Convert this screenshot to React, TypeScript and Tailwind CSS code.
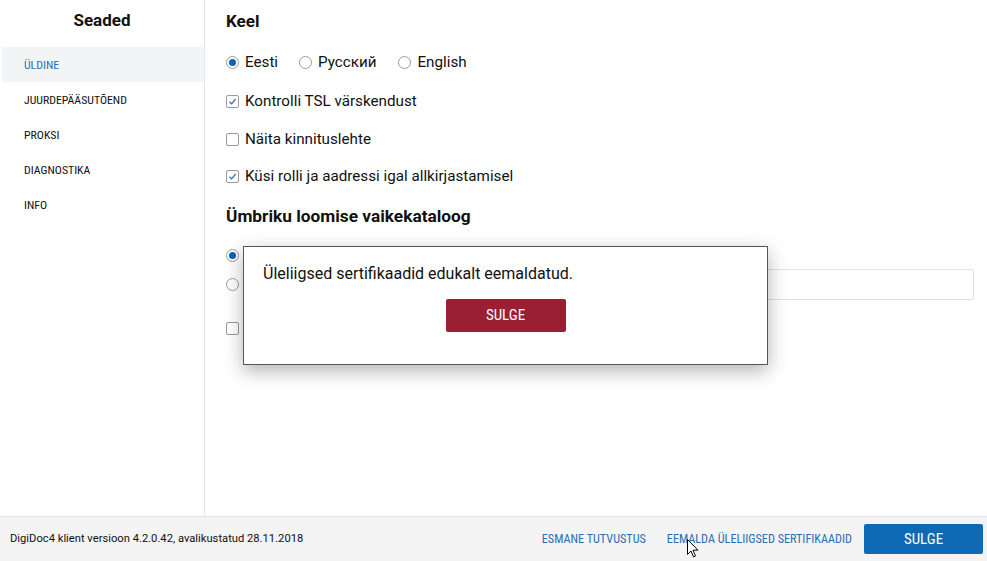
import React from "react";

const cond = "font-['Roboto_Condensed','Liberation_Sans_Narrow','DejaVu_Sans_Condensed',sans-serif]";

const Radio = ({checked}: {checked?: boolean}) => (
  <span className="inline-flex items-center justify-center w-[13px] h-[13px] rounded-full border border-[#9a9a9a] bg-white shrink-0">
    {checked && <span className="w-[7px] h-[7px] rounded-full bg-[#0f64b0]" />}
  </span>
);

const Check = ({checked}: {checked?: boolean}) => (
  <span className="inline-flex items-center justify-center w-[13px] h-[13px] rounded-[2px] border border-[#9a9a9a] bg-white shrink-0">
    {checked && (
      <svg width="9" height="9" viewBox="0 0 9 9" fill="none">
        <path d="M1.5 4.8 L3.6 6.8 L7.6 2" stroke="#2a6fb5" strokeWidth="1.2" />
      </svg>
    )}
  </span>
);

const navItems = ["ÜLDINE", "JUURDEPÄÄSUTÕEND", "PROKSI", "DIAGNOSTIKA", "INFO"];

export default function App() {
  return (
    <div className="w-[987px] h-[561px] flex flex-col bg-white font-['Roboto',sans-serif] text-[#111] overflow-hidden relative">
      <div className="flex flex-1 min-h-0">
        {/* sidebar */}
        <div className="w-[205px] border-r border-[#e2e5ea] flex flex-col pt-[9px]">
          <div className="text-center font-bold text-[17px] leading-[22px]">Seaded</div>
          <div className="mt-[16px] ml-[2px] flex flex-col">
            {navItems.map((n, i) => (
              <div
                key={n}
                className={`h-[35px] flex items-center pl-[22px] pt-[2px] text-[11.8px] ${cond} ${
                  i === 0 ? "bg-[#f3f4f6] text-[#2a6fb5]" : "text-[#111]"
                }`}>
                {n}
              </div>
            ))}
          </div>
        </div>

        {/* main */}
        <div className="flex-1 pl-[21px] pr-[13px] pt-[10px] flex flex-col">
          <div className="font-bold text-[17px] leading-[22px]">Keel</div>
          <div className="flex items-center mt-[19px] h-[22px] text-[15.2px]">
            <Radio checked />
            <span className="ml-[6px] mr-[21px]">Eesti</span>
            <Radio />
            <span className="ml-[6px] mr-[22px]">Русский</span>
            <Radio />
            <span className="ml-[6px]">English</span>
          </div>
          <div className="flex items-center mt-[17px] h-[22px] text-[15.2px]">
            <Check checked />
            <span className="ml-[6px]">Kontrolli TSL värskendust</span>
          </div>
          <div className="flex items-center mt-[16px] h-[22px] text-[15.2px]">
            <Check />
            <span className="ml-[6px]">Näita kinnituslehte</span>
          </div>
          <div className="flex items-center mt-[15px] h-[22px] text-[15.2px]">
            <Check checked />
            <span className="ml-[6px]">Küsi rolli ja aadressi igal allkirjastamisel</span>
          </div>
          <div className="font-bold text-[17.3px] leading-[22px] mt-[18px]">Ümbriku loomise vaikekataloog</div>
          <div className="flex items-center mt-[21px] h-[14px]">
            <Radio checked />
          </div>
          <div className="flex items-center mt-[7px] h-[31px]">
            <Radio />
            <div className="flex-1 ml-[520px] h-[31px] border border-[#dde2ea] rounded-[2px]" />
          </div>
          <div className="flex items-center mt-[22px] h-[13px]">
            <Check />
          </div>
        </div>
      </div>

      {/* footer */}
      <div className="h-[45px] bg-[#f4f4f4] border-t border-[#dfe2e7] flex items-center pl-[10px] pr-[4px]">
        <div className="text-[11.2px] text-[#111] flex-1 mt-[1px]">
          DigiDoc4 klient versioon 4.2.0.42, avalikustatud 28.11.2018
        </div>
        <div className={`text-[12.2px] text-[#2a6fb5] ${cond} mr-[21px] mt-[1px]`}>ESMANE TUTVUSTUS</div>
        <div className={`text-[12.2px] text-[#2a6fb5] ${cond} mr-[12px] mt-[1px]`}>EEMALDA ÜLELIIGSED SERTIFIKAADID</div>
        <button className={`w-[119px] h-[30px] bg-[#0f6ab5] text-white text-[15px] rounded-[2px] ${cond}`}>SULGE</button>
      </div>

      {/* dialog */}
      <div className="absolute left-[243px] top-[246px] w-[525px] h-[119px] bg-white border border-[#555] shadow-[0_6px_18px_rgba(0,0,0,0.3)] flex flex-col items-center">
        <div className="self-start ml-[19px] mt-[16px] text-[16px] leading-[22px]">
          Üleliigsed sertifikaadid edukalt eemaldatud.
        </div>
        <button className={`mt-[14px] w-[120px] h-[33px] shrink-0 bg-[#9b1f33] text-white text-[15px] rounded-[2px] ${cond}`}>
          SULGE
        </button>
      </div>

      {/* mouse cursor */}
      <svg className="absolute left-[687px] top-[539px]" width="12" height="19" viewBox="0 0 12 19">
        <path d="M0.5 0.5 L0.5 15.5 L4 12 L6.5 18 L8.5 17 L6 11.2 L11 11.2 Z" fill="white" stroke="black" strokeWidth="1" />
      </svg>
    </div>
  );
}
